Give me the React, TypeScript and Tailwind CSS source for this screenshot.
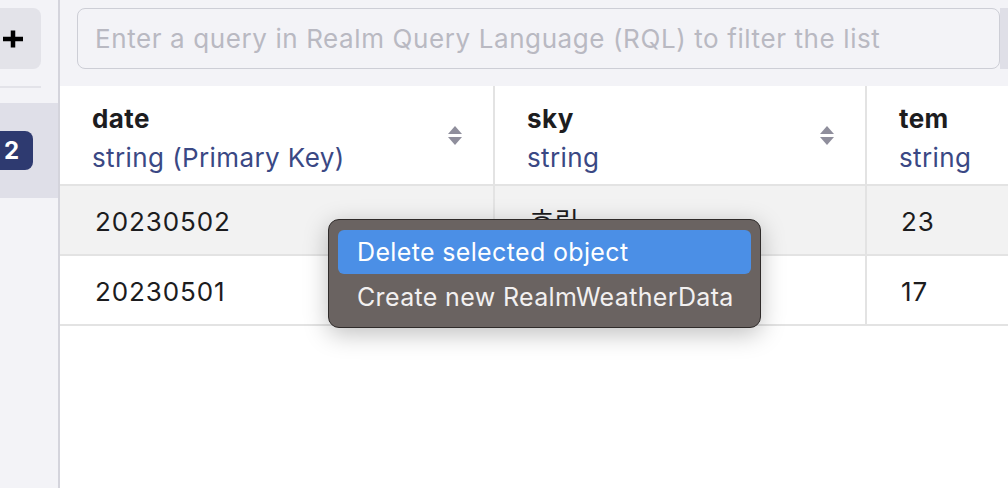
import React from 'react';

const COLUMNS = [
  { name: 'date', type: 'string (Primary Key)', width: 'w-[435px]', sortable: true },
  { name: 'sky', type: 'string', width: 'w-[372px]', sortable: true },
  { name: 'tem', type: 'string', width: 'flex-1', sortable: false },
];

// second row's sky value sits under the context menu, so it's left blank
const ROWS = [
  { date: '20230502', sky: '흐림', tem: '23' },
  { date: '20230501', sky: '', tem: '17' },
];

function SortIcon() {
  return (
    <svg width="14" height="19" viewBox="0 0 14 19" className="shrink-0">
      <path d="M7 0 L14 8 L0 8 Z" fill="#8f8e9c" />
      <path d="M0 11 L14 11 L7 19 Z" fill="#8f8e9c" />
    </svg>
  );
}

function Sidebar() {
  return (
    <div className="flex w-[60px] shrink-0 flex-col border-r-2 border-[#d4d4dc] bg-[#f3f3f7]">
      {/* add button */}
      <div className="-ml-[10px] mt-2 flex h-[61px] w-[51px] items-center rounded-lg bg-[#e3e3e9] pl-[12px]">
        <svg width="22" height="18" viewBox="0 0 22 18">
          <path d="M1 9 H21 M11 0.5 V17.5" stroke="#000" strokeWidth="4.5" />
        </svg>
      </div>
      <div className="mt-[17px] h-[2px] w-[41px] bg-[#e3e3e9]" />
      {/* selected class */}
      <div className="mt-[15px] flex h-[95px] items-center bg-[#dfdfe8]">
        <div className="-ml-[10px] flex h-[39px] w-[43px] items-center rounded-lg bg-[#2e3a70] pl-[14px] text-[24px] font-bold text-white">
          2
        </div>
      </div>
    </div>
  );
}

export default function App() {
  return (
    <div className="relative flex h-[488px] w-[1008px] overflow-hidden bg-white font-[Inter,'Noto_Sans_CJK_KR',sans-serif]">
      <Sidebar />

      <div className="flex min-w-0 flex-1 flex-col">
        {/* query bar */}
        <div className="flex h-[86px] shrink-0 items-start bg-[#f3f3f7] pl-[17px] pt-2">
          <div className="flex h-[61px] flex-1 items-center rounded-lg border-[1.5px] border-[#cdced6] pl-[17px] text-[26px] tracking-[0.6px] whitespace-nowrap text-[#b9b9c2]">
            Enter a query in Realm Query Language (RQL) to filter the list
          </div>
          <div className="h-[61px] w-2 bg-[#dfdfe7]" />
        </div>

        {/* header */}
        <div className="flex h-[100px] shrink-0 border-b-2 border-[#e3e3e3]">
          {COLUMNS.map((c, i) => (
            <div
              key={c.name}
              className={`${c.width} flex shrink-0 items-center pl-[32px] pr-[31px] ${i < 2 ? 'border-r-2 border-[#e3e3e3]' : ''}`}
            >
              <div className="flex-1 whitespace-nowrap pt-[6px] leading-[39px] tracking-[0.4px]">
                <div className="text-[26px] font-bold text-[#1d1d1f]">{c.name}</div>
                <div className="text-[26px] text-[#3a4884]">{c.type}</div>
              </div>
              {c.sortable && <SortIcon />}
            </div>
          ))}
        </div>

        {/* rows */}
        {ROWS.map((r, ri) => (
          <div
            key={r.date}
            className={`flex h-[70px] shrink-0 border-b-2 border-[#e3e3e3] text-[26px] tracking-[0.9px] text-[#1c1c1e] ${ri === 0 ? 'bg-[#f2f2f2]' : 'bg-white'}`}
          >
            <div className="flex w-[435px] shrink-0 items-center border-r-2 border-[#e3e3e3] pl-[35px] pt-[2px]">{r.date}</div>
            <div className="flex w-[372px] shrink-0 items-center border-r-2 border-[#e3e3e3] pl-[35px] pt-[2px]">{r.sky}</div>
            <div className="flex flex-1 items-center pl-[34px] pt-[2px]">{r.tem}</div>
          </div>
        ))}
      </div>

      {/* context menu */}
      <div className="absolute left-[328px] top-[219px] flex w-[433px] flex-col gap-[2px] rounded-[11px] border border-[#2f2b2a] bg-[#6a6361] px-[9px] pb-[7px] pt-[10px] tracking-[0.35px] shadow-[0_6px_24px_rgba(0,0,0,0.25)]">
        <div className="flex h-[44px] items-center rounded-[6px] bg-[#4b8fe6] pl-[19px] pt-[1px] text-[25px] text-white">
          Delete selected object
        </div>
        <div className="flex h-[44px] items-center pl-[19px] text-[25px] text-[#f2f0f0]">
          Create new RealmWeatherData
        </div>
      </div>
    </div>
  );
}
